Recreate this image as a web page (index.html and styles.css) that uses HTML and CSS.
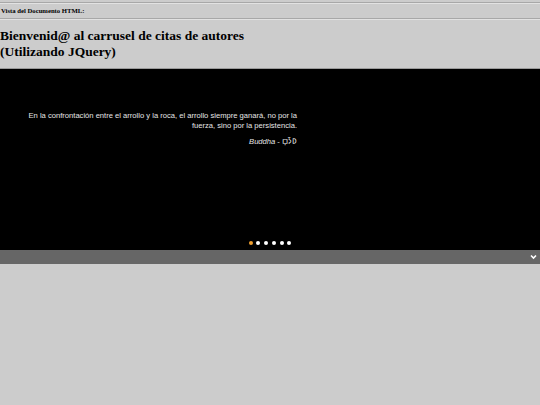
FILE: index.html
```html
<!DOCTYPE html>
<html>
<head>
<meta charset="utf-8">
<link rel="stylesheet" href="styles.css">
</head>
<body>
<div class="page">
  <hr class="rule top">
  <div class="label">Vista del Documento HTML:</div>
  <hr class="rule">
  <h1 class="title">Bienvenid@ al carrusel de citas de autores<br>(Utilizando JQuery)</h1>
  <div class="carousel">
    <div class="slide">
      <p class="quote">En la confrontación entre el arrollo y la roca, el arrollo siempre ganará, no por la fuerza, sino por la persistencia.</p>
      <p class="author"><em>Buddha</em> - <span class="tofu">𑀩𑀼𑀤𑁆𑀥</span></p>
    </div>
    <div class="dots">
      <span class="dot active"></span><span class="dot"></span><span class="dot"></span><span class="dot"></span><span class="dot"></span><span class="dot"></span>
    </div>
  </div>
  <div class="bar">
    <svg class="chev" width="7" height="6" viewBox="0 0 7 6"><path d="M1 1.5 L3.5 4 L6 1.5" stroke="#fff" stroke-width="1.6" fill="none"/></svg>
  </div>
</div>
</body>
</html>
```

FILE: styles.css
```css
html, body {
  margin: 0;
  padding: 0;
  background: #cccccc;
}
.page {
  font-family: "Liberation Serif", serif;
  color: #000;
}
.rule {
  margin: 0;
  height: 0;
  border: 0;
  border-top: 1px solid #a8a8a8;
  border-bottom: 1px solid #e2e2e2;
}
.rule.top {
  margin-top: 2px;
}
.label {
  font-size: 6.7px;
  font-weight: bold;
  line-height: 14px;
  padding-left: 1px;
}
.title {
  margin: 8px 0 8px 0;
  font-size: 13.5px;
  font-weight: bold;
  line-height: 16px;
}
.carousel {
  background: #000;
  height: 181px;
  border-top: 1px solid #9a9a9a;
  display: flex;
  flex-direction: column;
  justify-content: space-between;
}
.slide {
  width: 270px;
  margin: 42px 0 0 27px;
  font-family: "Liberation Sans", Arial, sans-serif;
  font-size: 7.6px;
  color: #e6e6e6;
  text-align: right;
}
.quote {
  margin: 0;
  line-height: 9.5px;
}
.author {
  margin: 7px 0 0 0;
  line-height: 10px;
}
.dots {
  display: flex;
  justify-content: center;
  gap: 3.8px;
  padding: 0 0 5px 0;
  margin-left: 0;
}
.dot {
  width: 4px;
  height: 4px;
  border-radius: 50%;
  background: #fff;
}
.dot.active {
  background: #f0a030;
}
.bar {
  background: #666666;
  height: 14px;
  display: flex;
  justify-content: flex-end;
  align-items: center;
  padding-right: 3px;
}
.chev {
  display: block;
}
```
